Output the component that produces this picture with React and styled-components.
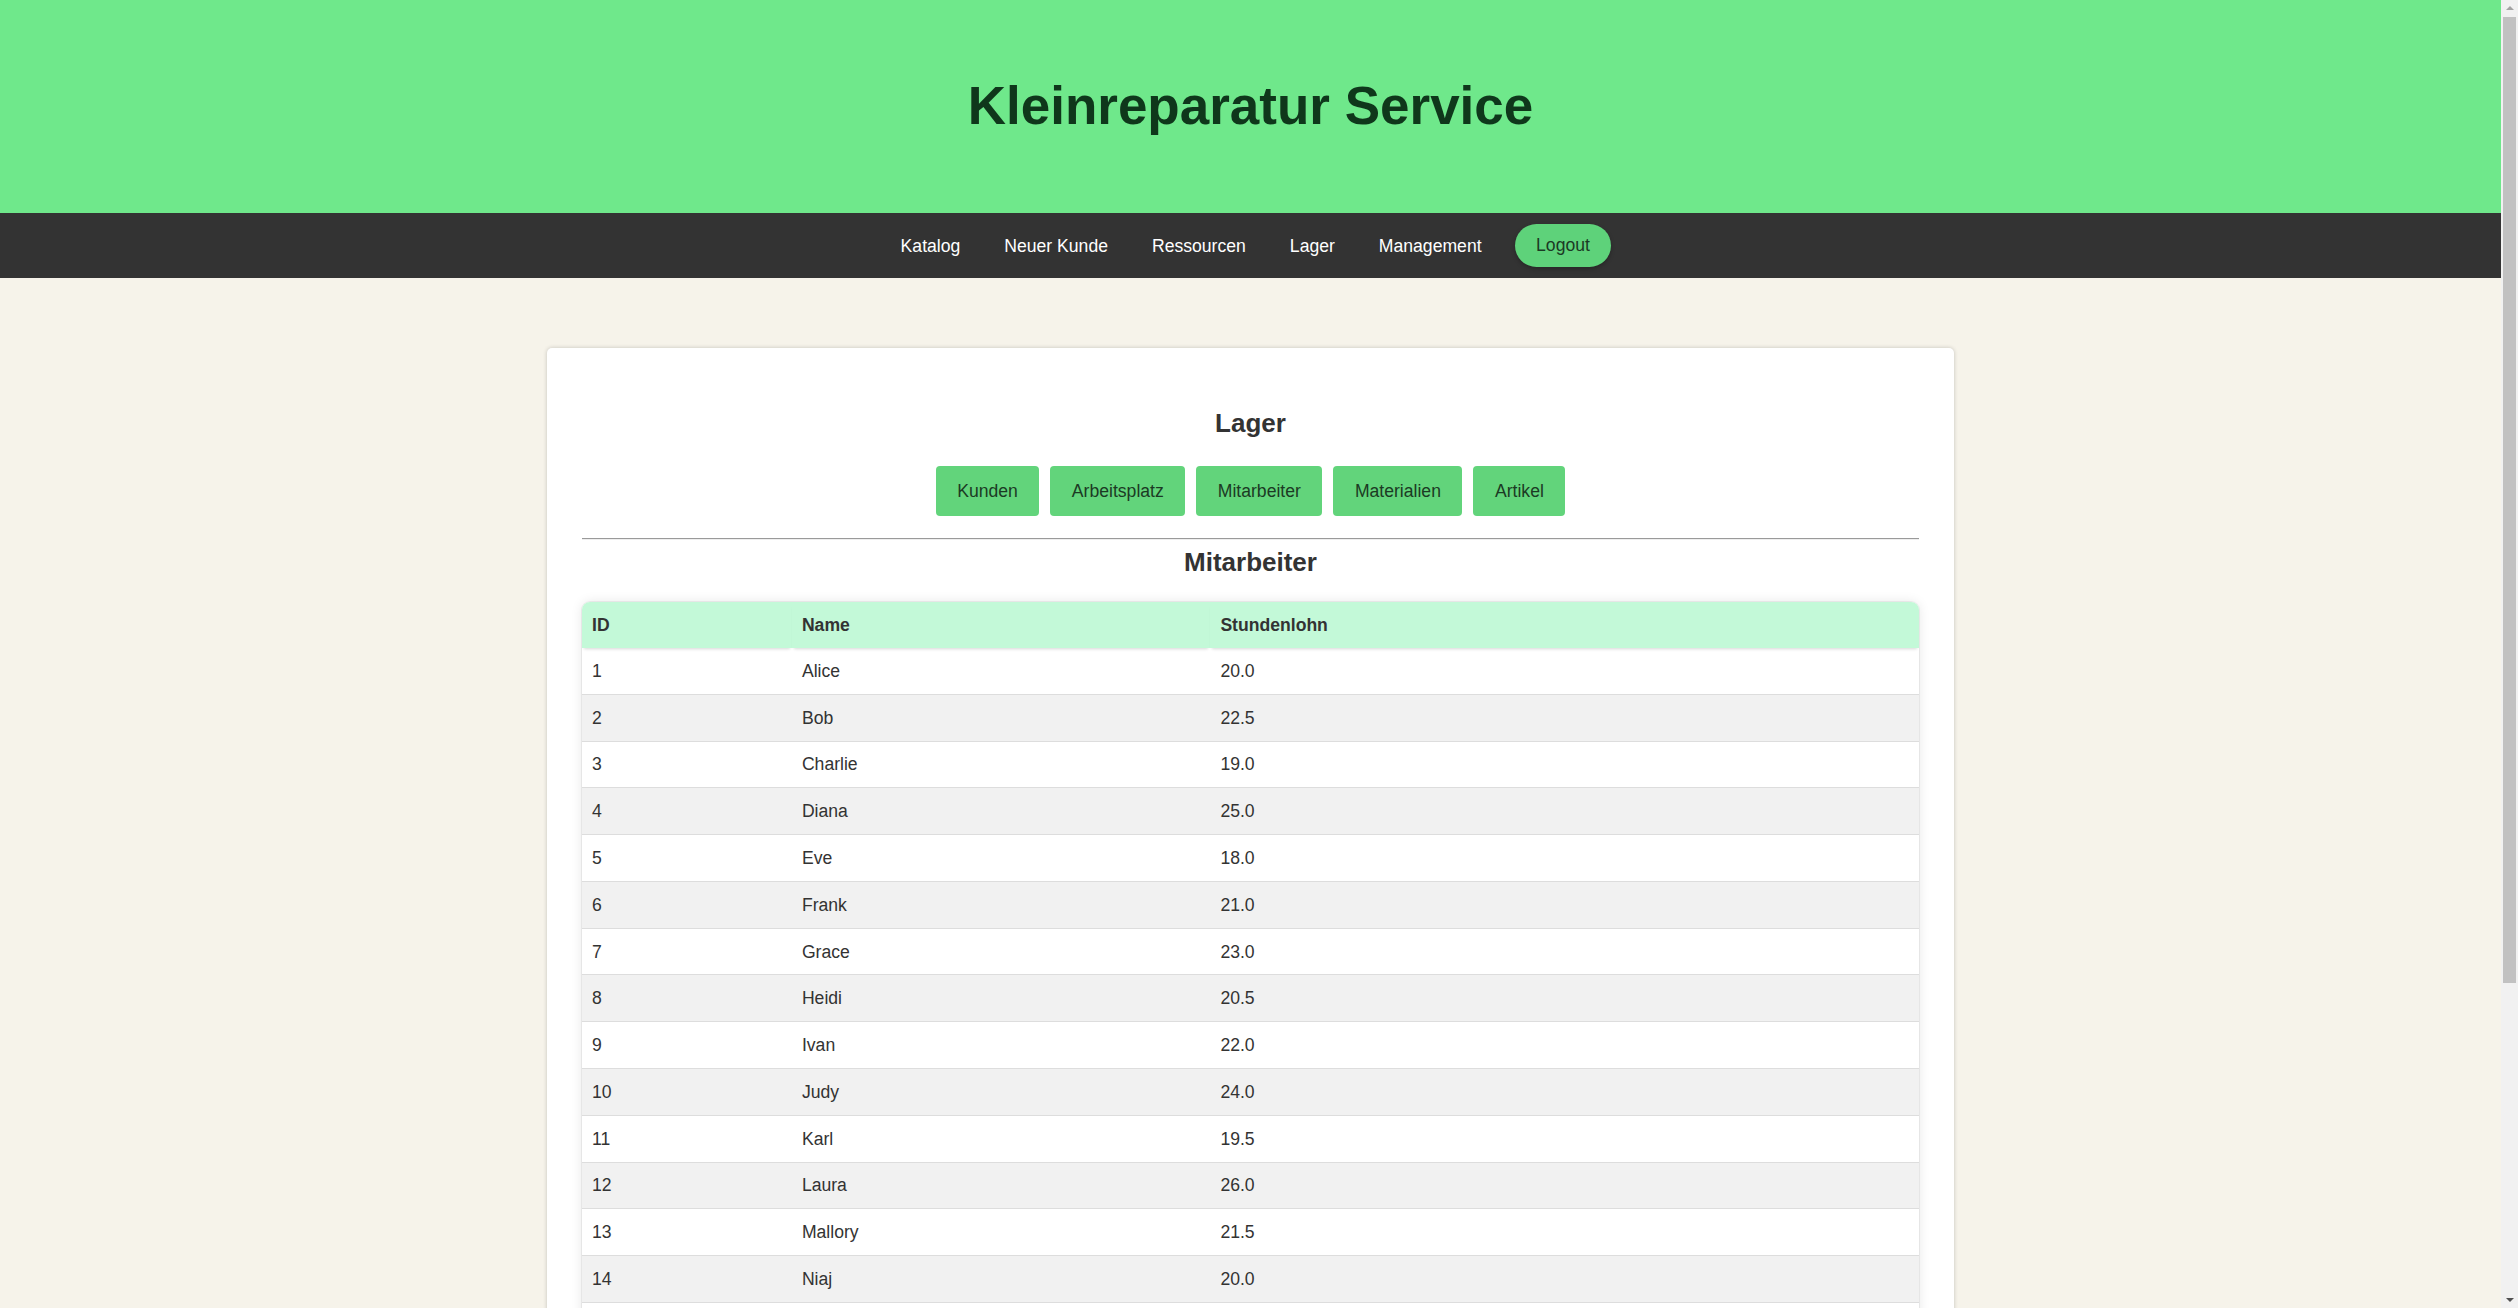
import React from "react";
import styled, { createGlobalStyle } from "styled-components";

const GlobalStyle = createGlobalStyle`
  html, body {
    margin: 0;
    padding: 0;
  }
  html {
    scrollbar-width: none;
  }
  ::-webkit-scrollbar {
    display: none;
  }
  body {
    background: #f6f3ea;
    font-family: "Liberation Sans", Arial, sans-serif;
    color: #333333;
    padding-right: 17px;
  }
`;

const ScrollTrack = styled.div`
  position: fixed;
  top: 0;
  right: 0;
  width: 17px;
  height: 100vh;
  background: #f1f1f1;
`;

const ScrollThumb = styled.div`
  position: absolute;
  top: 17px;
  left: 2px;
  width: 13px;
  height: 966px;
  background: #c1c1c1;
`;

const ArrowUp = styled.div`
  position: absolute;
  top: 6px;
  left: 4.5px;
  width: 0;
  height: 0;
  border-left: 4px solid transparent;
  border-right: 4px solid transparent;
  border-bottom: 4px solid #a3a3a3;
`;

const ArrowDown = styled.div`
  position: absolute;
  bottom: 6px;
  left: 4.5px;
  width: 0;
  height: 0;
  border-left: 4px solid transparent;
  border-right: 4px solid transparent;
  border-top: 4px solid #505050;
`;

const Header = styled.header`
  height: 213px;
  background: #6fe88b;
  display: flex;
  align-items: center;
  justify-content: center;
`;

const Title = styled.h1`
  margin: 0;
  font-size: 53px;
  font-weight: bold;
  color: #0f371b;
  line-height: 1.15;
`;

const Nav = styled.nav`
  height: 65px;
  background: #333333;
  display: flex;
  align-items: center;
  justify-content: center;
`;

const NavLink = styled.a`
  color: #ffffff;
  text-decoration: none;
  font-size: 17.6px;
  line-height: 20px;
  padding: 0 22px;
`;

const LogoutButton = styled.button`
  margin: 0 11px;
  height: 43px;
  padding: 0 21.5px;
  border: none;
  border-radius: 22px;
  background: #5ed27a;
  color: #1b3a24;
  font-family: inherit;
  font-size: 17.6px;
  box-shadow: 0 2px 4px rgba(0, 0, 0, 0.25);
  cursor: pointer;
`;

const Card = styled.main`
  width: 1407px;
  box-sizing: border-box;
  margin: 70px auto 70px;
  background: #ffffff;
  border-radius: 5px;
  box-shadow: 0 0 4px rgba(0, 0, 0, 0.2);
  padding: 35px 35px;
`;

const SectionTitle = styled.h2`
  margin: ${(p) => p.$margin};
  text-align: center;
  font-size: 26px;
  line-height: 30px;
  font-weight: bold;
  color: #333333;
`;

const ButtonRow = styled.div`
  display: flex;
  justify-content: center;
  gap: 11px;
  margin-bottom: 22px;
`;

const TabButton = styled.button`
  height: 50px;
  padding: 0 21.5px;
  border: none;
  border-radius: 4px;
  background: #62d47b;
  color: #1c3a24;
  font-family: inherit;
  font-size: 17.6px;
  cursor: pointer;
`;

const Divider = styled.hr`
  margin: 0;
  border: none;
  border-top: 1px solid #9a9a9a;
  border-bottom: 1px solid #eeeeee;
`;

const Table = styled.table`
  width: 100%;
  border-collapse: separate;
  border-spacing: 0;
  border-radius: 8px;
  overflow: hidden;
  box-shadow: 0 0 12px rgba(0, 0, 0, 0.1), 0 0 0 1px rgba(0, 0, 0, 0.05);
  font-size: 17.6px;
  line-height: 20px;
  color: #333333;
`;

const Th = styled.th`
  text-align: left;
  font-weight: bold;
  background: #c3f9d8;
  padding: 13px 10px;
  width: ${(p) => p.$w};
  box-shadow: 0 3px 3px -2px rgba(0, 0, 0, 0.16);
  position: relative;
`;

const Row = styled.tr`
  background: ${(p) => (p.$even ? "#f1f1f1" : "#ffffff")};
`;

const Td = styled.td`
  padding: 12.9px 10px;
  border-bottom: 1px solid #dddddd;
`;

const employees = [
  [1, "Alice", "20.0"],
  [2, "Bob", "22.5"],
  [3, "Charlie", "19.0"],
  [4, "Diana", "25.0"],
  [5, "Eve", "18.0"],
  [6, "Frank", "21.0"],
  [7, "Grace", "23.0"],
  [8, "Heidi", "20.5"],
  [9, "Ivan", "22.0"],
  [10, "Judy", "24.0"],
  [11, "Karl", "19.5"],
  [12, "Laura", "26.0"],
  [13, "Mallory", "21.5"],
  [14, "Niaj", "20.0"],
  [15, "Olivia", "23.5"],
  [16, "Peggy", "22.0"],
  [17, "Rupert", "19.0"],
  [18, "Sybil", "24.5"],
  [19, "Trent", "21.0"],
  [20, "Victor", "20.5"],
  [21, "Walter", "22.5"],
];

const navItems = ["Katalog", "Neuer Kunde", "Ressourcen", "Lager", "Management"];
const tabs = ["Kunden", "Arbeitsplatz", "Mitarbeiter", "Materialien", "Artikel"];

export default function App() {
  return (
    <>
      <GlobalStyle />
      <Header>
        <Title>Kleinreparatur Service</Title>
      </Header>
      <Nav>
        {navItems.map((item) => (
          <NavLink key={item} href="#">
            {item}
          </NavLink>
        ))}
        <LogoutButton>Logout</LogoutButton>
      </Nav>
      <Card>
        <SectionTitle $margin="25px 0 28px">Lager</SectionTitle>
        <ButtonRow>
          {tabs.map((t) => (
            <TabButton key={t}>{t}</TabButton>
          ))}
        </ButtonRow>
        <Divider />
        <SectionTitle $margin="7px 0 25px">Mitarbeiter</SectionTitle>
        <Table>
          <thead>
            <tr>
              <Th $w="15.7%">ID</Th>
              <Th $w="31.3%">Name</Th>
              <Th $w="53%">Stundenlohn</Th>
            </tr>
          </thead>
          <tbody>
            {employees.map(([id, name, wage], i) => (
              <Row key={id} $even={i % 2 === 1}>
                <Td>{id}</Td>
                <Td>{name}</Td>
                <Td>{wage}</Td>
              </Row>
            ))}
          </tbody>
        </Table>
      </Card>
      <ScrollTrack>
        <ArrowUp />
        <ScrollThumb />
        <ArrowDown />
      </ScrollTrack>
    </>
  );
}
